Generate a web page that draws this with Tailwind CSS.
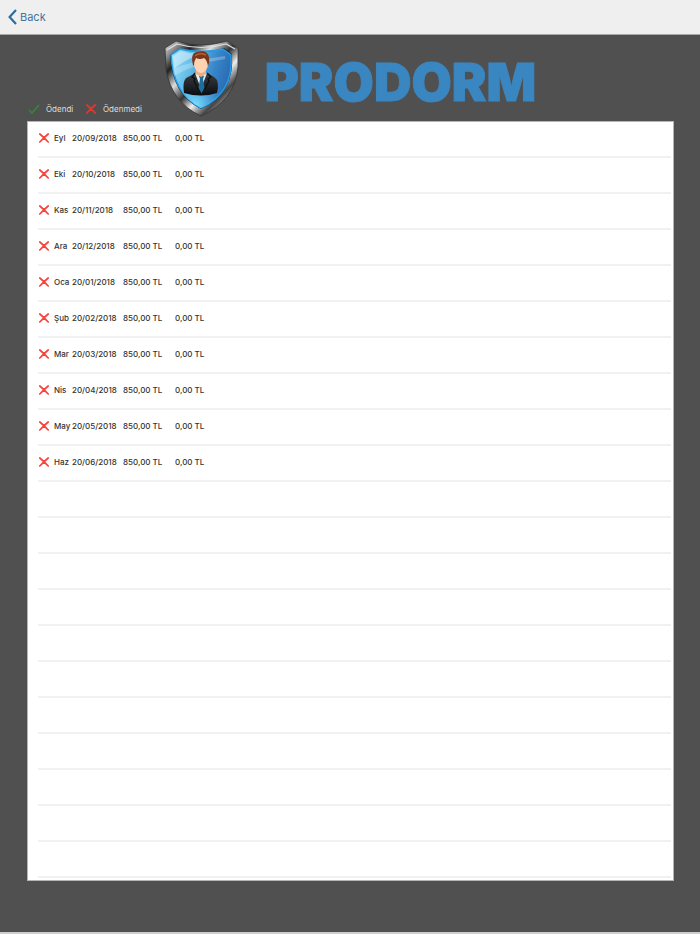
<!DOCTYPE html>
<html lang="tr">
<head>
<meta charset="utf-8">
<meta name="viewport" content="width=device-width, initial-scale=1">
<title>Prodorm</title>
<script src="https://cdn.jsdelivr.net/npm/@tailwindcss/browser@4"></script>
</head>
<body class="flex min-h-screen flex-col border-b-2 border-[#cfcdcd] bg-[#505050] font-[Inter,'Liberation_Sans',sans-serif] text-[#333]">
<svg class="hidden" aria-hidden="true">
  <symbol id="cross" viewBox="0 0 10 10"><path d="M.8 1 Q5 4.500 9.200 9 M9.200 1 Q5 4.500 .8 9" fill="none" stroke="currentColor" stroke-width="1.700" stroke-linecap="round"/></symbol>
</svg>
<nav class="flex h-[35px] items-center border-b border-[#a8a8a8] bg-[#efefef] pl-2">
  <a href="#" class="flex items-center gap-[3px] text-[11px] leading-4 text-[#44749c]">
    <svg class="h-4 w-[9px]" viewBox="0 0 9 16" fill="none" stroke="#2f6b9b" stroke-width="2.200" aria-hidden="true"><path d="M8 1 1.600 8 8 15"/></svg>Back</a>
</nav>
<header class="grid h-[86px] grid-cols-1">
  <div class="col-start-1 row-start-1 flex items-start justify-center gap-[26px] pt-[5px]">
    <svg class="h-[77px] w-[75px]" viewBox="0 0 75 77" role="img" aria-label="Prodorm">
      <defs>
        <linearGradient id="metal" x1="0" y1="0" x2="1" y2="1">
          <stop offset="0" stop-color="#eee"/><stop offset=".12" stop-color="#888"/><stop offset=".22" stop-color="#222"/><stop offset=".36" stop-color="#ddd"/><stop offset=".5" stop-color="#333"/><stop offset=".62" stop-color="#eee"/><stop offset=".75" stop-color="#444"/><stop offset=".88" stop-color="#ccc"/><stop offset="1" stop-color="#555"/>
        </linearGradient>
        <linearGradient id="glass" x1="0" y1=".2" x2="1" y2=".5">
          <stop offset="0" stop-color="#8fdcf8"/><stop offset=".35" stop-color="#62b9e6"/><stop offset=".7" stop-color="#3785c8"/><stop offset="1" stop-color="#2867b0"/>
        </linearGradient>
        <radialGradient id="glow" cx=".4" cy=".95" r=".5"><stop offset="0" stop-color="#7ee0ff"/><stop offset="1" stop-color="#4aa7e0" stop-opacity="0"/></radialGradient>
        <linearGradient id="suit" x1="0" y1="0" x2="0" y2="1"><stop offset="0" stop-color="#3a3f44"/><stop offset="1" stop-color="#0a0c10"/></linearGradient>
      </defs>
      <path d="M1 8 12 1Q37 9 63 1L74 8V27Q71 61 37 76Q7 62 2 29Z" fill="url(#metal)" stroke="#333" stroke-width=".8"/>
      <path d="M3 10 13 4Q37 11 62 4L71 9" fill="none" stroke="#ddd" stroke-width="1.200"/>
      <path d="M16 9Q37 15 60 8L68 14Q71 54 37 69Q8 55 6 15Z" fill="#101820"/>
      <path d="M16 9Q38 14 59 9L67 15Q70 53 37 68Q9 54 7 15Z" fill="url(#glass)" stroke="#209ce8" stroke-width="1.500"/>
      <path d="M16 9Q38 14 59 9L67 15Q70 53 37 68Q9 54 7 15Z" fill="url(#glow)"/>
      <path d="M9 29Q30 20 61 16V19Q32 23 10 36Z" fill="#fff" opacity=".25"/>
      <path d="M9 16 17 11Q29 15 39 13Q20 20 10 29Z" fill="#fff" opacity=".4"/>
      <path d="M20 53Q18 39 24 37L32 33H43L50 37Q56 41 53 53Q37 58 20 53Z" fill="url(#suit)"/>
      <path d="M31 33 37 49 43 33Z" fill="#dfeef6"/>
      <path d="m35 36 2-1 3 1-1 3 2 11-3 4-4-4 2-11Z" fill="#1e6e9b"/>
      <path d="m31 33-3 4 3 2-1 2 7 13M43 33l4 4-3 2 1 2-7 13" fill="none" stroke="#111" stroke-width="1.500"/>
      <path d="M32 28h10v6l-5 3-5-3Z" fill="#efab83"/>
      <ellipse cx="37" cy="24" rx="7" ry="9" fill="#ffd3b2"/>
      <path d="M29 25Q26 13 33 12Q43 9 45 17Q46 22 44 26Q43 20 40 18Q36 20 32 18Q30 21 30 26Z" fill="#7b3519"/>
      <path d="M31 16Q35 12 42 15" fill="none" stroke="#b4613a" stroke-width="1.500"/>
    </svg>
    <h1 class="pt-[17px] text-[52px] leading-[52px] font-black text-[#3a86c0] [-webkit-text-stroke:1px_#3a86c0]">PRODORM</h1>
  </div>
  <div class="col-start-1 row-start-1 flex items-center self-end pb-[7px] pl-7 text-[8px] leading-[10px] text-[#ddd]">
    <svg class="mr-[6px] h-[10px] w-3" viewBox="0 0 12 10" fill="none" stroke="#35883a" stroke-width="1.500" aria-hidden="true"><path d="m1 6 3 3 7-8"/></svg>
    <span class="w-10">Ödendi</span>
    <svg class="mr-[7px] size-[10px] text-[#e0382e]" aria-hidden="true"><use href="#cross"/></svg>
    <span>Ödenmedi</span>
  </div>
</header>
<main class="mr-[26px] mb-[50px] ml-[27px] border border-[#b5b5b5] bg-white pr-[2px] pb-[2px] pl-[10px]">
  <table class="w-full table-fixed border-separate border-spacing-0 text-left text-[8px] leading-[10px] font-medium">
    <colgroup><col class="w-4"><col class="w-[18px]"><col class="w-[51px]"><col class="w-[52px]"><col></colgroup>
    <tbody id="payments"></tbody>
  </table>
</main>
<script>
const months = [["Eyl","09"],["Eki","10"],["Kas","11"],["Ara","12"],["Oca","01"],["Şub","02"],["Mar","03"],["Nis","04"],["May","05"],["Haz","06"]];
const rowClass = "h-9 [&>td]:h-9 [&>td]:border-b-2 [&>td]:border-[#f1f1f1] [&>td]:pb-[2px]";
const cross = '<svg class="ml-px size-[10px] text-[#f5453d]" role="img" aria-label="Ödenmedi"><use href="#cross"/></svg>';
let rows = months.map(([name, m]) => `<tr class="${rowClass}"><td>${cross}</td><td class="whitespace-nowrap">${name}</td><td>20/${m}/2018</td><td>850,00 TL</td><td>0,00 TL</td></tr>`).join("");
for (let i = 0; i < 11; i++) rows += `<tr class="${rowClass}"><td colspan="5"></td></tr>`;
document.getElementById("payments").innerHTML = rows;
</script>
</body>
</html>
